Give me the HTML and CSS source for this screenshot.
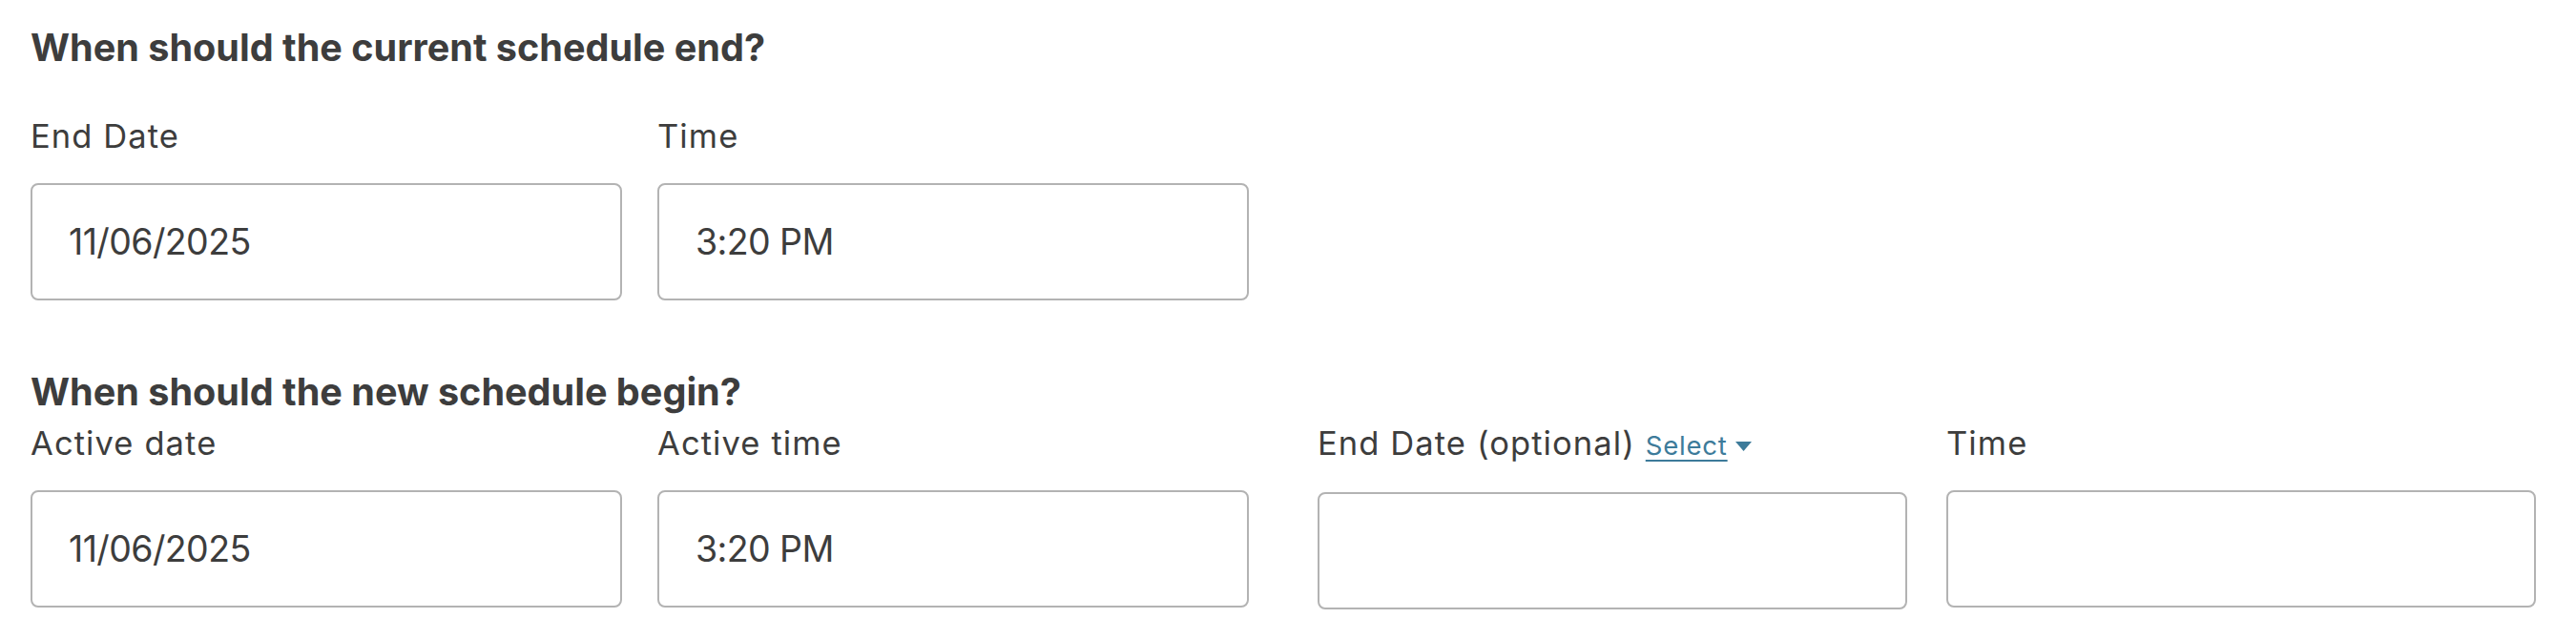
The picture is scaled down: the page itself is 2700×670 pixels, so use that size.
FILE: index.html
```html
<!DOCTYPE html>
<html lang="en">
<head>
<meta charset="utf-8">
<title>Schedule</title>
<link rel="stylesheet" href="styles.css">
</head>
<body>
<div class="page">
  <section class="section section-end">
    <h2 class="heading">When should the current schedule end?</h2>
    <div class="row">
      <div class="pair pair-a">
        <div class="field">
          <label class="label">End Date</label>
          <input class="input" type="text" value="11/06/2025">
        </div>
        <div class="field">
          <label class="label">Time</label>
          <input class="input" type="text" value="3:20 PM">
        </div>
      </div>
    </div>
  </section>
  <section class="section section-begin">
    <h2 class="heading heading-tight">When should the new schedule begin?</h2>
    <div class="row">
      <div class="pair pair-a">
        <div class="field">
          <label class="label">Active date</label>
          <input class="input" type="text" value="11/06/2025">
        </div>
        <div class="field">
          <label class="label">Active time</label>
          <input class="input" type="text" value="3:20 PM">
        </div>
      </div>
      <div class="pair pair-b">
        <div class="field">
          <label class="label">End Date (optional) <a class="select-link" href="#">Select</a><svg class="caret" viewBox="0 0 17 10" width="17" height="10"><path d="M0 0 H17 L8.5 10 Z" fill="#3d7b9a"/></svg></label>
          <input class="input" type="text" value="">
        </div>
        <div class="field">
          <label class="label">Time</label>
          <input class="input" type="text" value="">
        </div>
      </div>
    </div>
  </section>
</div>
</body>
</html>
```

FILE: styles.css
```css
* { box-sizing: border-box; }
html, body {
  margin: 0;
  padding: 0;
  background: #ffffff;
}
body {
  font-family: Inter, "Liberation Sans", sans-serif;
  color: #3d3d3d;
}
.page {
  padding: 27px 0 0 32px;
}
.heading {
  margin: 0;
  font-size: 39.6px;
  line-height: 46px;
  font-weight: 700;
  color: #3d3d3d;
}
.section-end .heading {
  margin-bottom: 50px;
}
.section-begin {
  margin-top: 73px;
}
.heading-tight {
  margin-bottom: 11px;
}
.row {
  display: flex;
  gap: 72px;
}
.pair {
  display: flex;
}
.pair-a { gap: 37px; }
.pair-b { gap: 41px; }
.field {
  display: flex;
  flex-direction: column;
  width: 620px;
}
.pair-b .field { width: 618px; }
.label {
  font-size: 34.5px;
  line-height: 40px;
  letter-spacing: 1.1px;
  font-weight: 400;
  color: #3d3d3d;
  margin-bottom: 29px;
  display: flex;
  align-items: baseline;
  white-space: pre;
}
.select-link {
  font-size: 27.5px;
  letter-spacing: 0.8px;
  color: #3d7b9a;
  text-decoration: underline;
  text-decoration-thickness: 2px;
  text-underline-offset: 5px;
  margin-left: 0;
}
.caret {
  margin-left: 8px;
  align-self: center;
  position: relative;
  top: 2px;
}
.input {
  height: 123px;
  width: 100%;
  border: 2px solid #b3b3b3;
  border-radius: 8px;
  padding: 0 38px;
  font-family: Inter, "Liberation Sans", sans-serif;
  font-size: 37.5px;
  letter-spacing: -0.6px;
  line-height: 46px;
  color: #3d3d3d;
  background: #ffffff;
  outline: none;
}
```
